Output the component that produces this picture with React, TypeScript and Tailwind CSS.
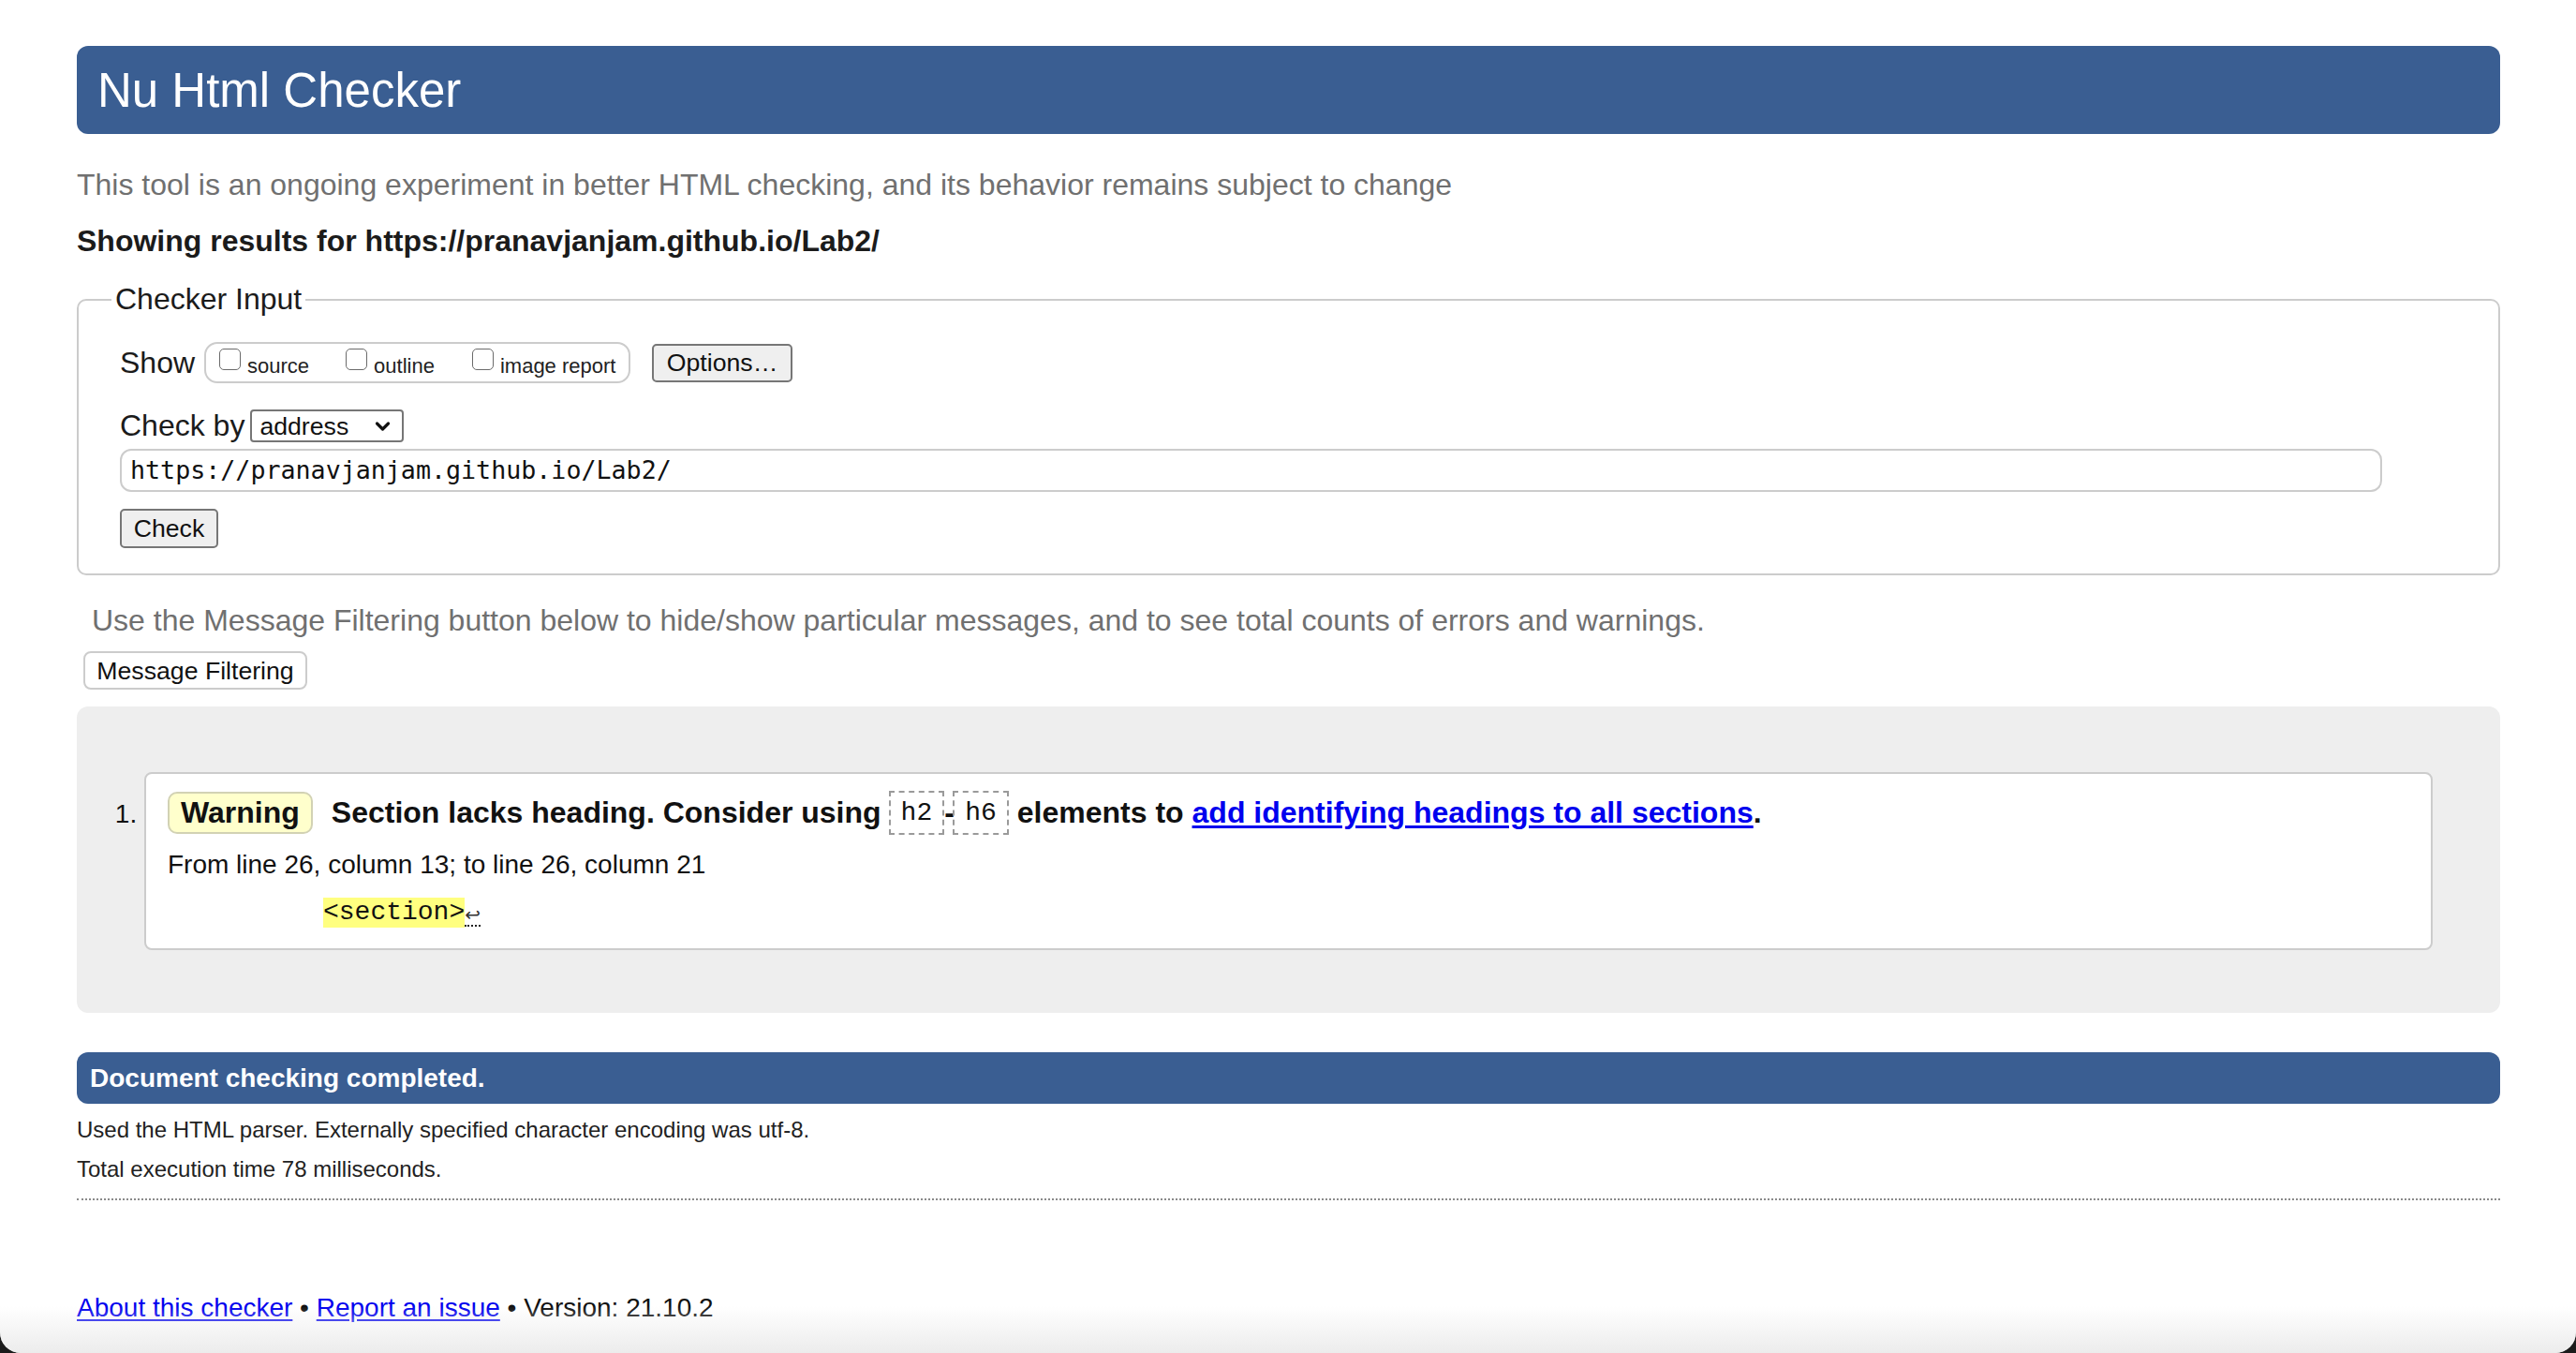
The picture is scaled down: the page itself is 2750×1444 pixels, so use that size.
import React from "react";

function Box({ label }: { label: string }) {
  return (
    <label className="flex items-center">
      <span className="-mt-[8px] block h-[23px] w-[23px] rounded-[5px] border-[1.5px] border-[#6b6b6b] bg-white" />
      <span className="ml-[7px] mt-[8px] text-[22px] leading-[26px] text-[#222]">{label}</span>
    </label>
  );
}

export default function App() {
  return (
    <div className="w-[2750px] h-[1444px] bg-[#1b1b1b] overflow-hidden">
      <div className="relative h-[1444px] w-[2750px] overflow-hidden rounded-b-[22px] bg-white font-['Liberation_Sans',Arial,sans-serif] text-[#111]">
        <div className="pl-[82px] pr-[81px] pt-[49px]">
          <header className="flex h-[94px] items-center rounded-[12px] bg-[#3a5e92] pl-[22px] text-[51px] leading-none text-white">
            Nu Html Checker
          </header>

          <p className="mt-[36px] text-[32px] leading-[37px] text-[#707070]">
            This tool is an ongoing experiment in better HTML checking, and its behavior remains subject to change
          </p>
          <p className="mt-[23px] text-[32px] font-bold leading-[37px] text-[#1b1b1b]">
            Showing results for https://pranavjanjam.github.io/Lab2/
          </p>

          <fieldset className="mt-[25px] rounded-[10px] border-2 border-[#cccccc] pb-[27px] pl-[44px] pr-[40px]">
            <legend className="-ml-[9px] px-[4px] text-[32px] leading-[37px] text-[#1b1b1b]">Checker Input</legend>

            <div className="mt-[27px] flex h-[44px] items-center">
              <span className="text-[32px] leading-[37px] text-[#1b1b1b]">Show</span>
              <div className="ml-[10px] flex h-[44px] w-[455px] items-center rounded-[14px] border-2 border-[#cccccc] pl-[14px]">
                <Box label="source" />
                <div className="w-[39px]" />
                <Box label="outline" />
                <div className="w-[40px]" />
                <Box label="image report" />
              </div>
              <button className="ml-[23px] flex h-[41px] w-[150px] items-center justify-center rounded-[5px] border-2 border-[#767676] bg-[#efefef] text-[26.67px] text-[#111]">
                Options…
              </button>
            </div>

            <div className="mt-[28px] flex h-[35px] items-center">
              <span className="text-[32px] leading-[37px] text-[#1b1b1b]">Check by</span>
              <div className="ml-[6px] flex h-[35px] w-[164px] items-center justify-between rounded-[4px] border-2 border-[#767676] bg-white pl-[8px] pr-[12px] text-[26.67px] text-[#111]">
                <span>address</span>
                <svg width="17" height="12" viewBox="0 0 17 12" fill="none">
                  <path d="M2.5 3 L8.5 9 L14.5 3" stroke="#111" strokeWidth="3.2" strokeLinecap="round" strokeLinejoin="round" />
                </svg>
              </div>
            </div>

            <div className="mt-[7px] flex h-[46px] w-[2415px] items-center rounded-[12px] border-2 border-[#cccccc] pl-[9px] font-['DejaVu_Sans_Mono',monospace] text-[26.67px] text-[#111]">
              https://pranavjanjam.github.io/Lab2/
            </div>

            <button className="mt-[18px] flex h-[42px] w-[105px] items-center justify-center rounded-[5px] border-2 border-[#767676] bg-[#efefef] text-[26.67px] text-[#111]">
              Check
            </button>
          </fieldset>

          <p className="ml-[16px] mt-[30px] text-[32px] leading-[37px] text-[#707070]">
            Use the Message Filtering button below to hide/show particular messages, and to see total counts of errors and warnings.
          </p>
          <button className="ml-[7px] mt-[14px] flex h-[41px] w-[239px] items-center justify-center rounded-[8px] border-2 border-[#cccccc] bg-white text-[26.67px] text-[#111]">
            Message Filtering
          </button>

          <div className="mt-[18px] rounded-[12px] bg-[#eeeeee] pb-[67px] pl-[72px] pr-[72px] pt-[70px]">
            <ol className="list-decimal">
              <li className="rounded-[8px] border-2 border-[#cccccc] bg-white pb-[22px] pl-[23px] pt-[18px] text-[28px] leading-[32px] text-[#111]">
                <div className="flex items-center text-[32px] font-bold leading-[37px] text-[#111]">
                  <span className="flex h-[45px] items-center rounded-[10px] border-2 border-[#d2d2b4] bg-[#ffffcc] px-[12px]">Warning</span>
                  <span className="ml-[20px]">Section lacks heading. Consider using</span>
                  <code className="ml-[8px] flex h-[47px] items-center border-2 border-dashed border-[#9a9a9a] px-[11px] font-['Liberation_Mono',monospace] text-[28px] font-normal">h2</code>
                  <span className="w-[9px] text-center">-</span>
                  <code className="flex h-[47px] items-center border-2 border-dashed border-[#9a9a9a] px-[11px] font-['Liberation_Mono',monospace] text-[28px] font-normal">h6</code>
                  <span className="ml-[9px]">
                    elements to{" "}
                    <a href="#" className="text-[#0000ee] underline underline-offset-[3px]">add identifying headings to all sections</a>.
                  </span>
                </div>
                <p className="mt-[16px] text-[28px] leading-[32px] text-[#111]">From line 26, column 13; to line 26, column 21</p>
                <p className="ml-[166px] mt-[19px] flex items-center text-[28px] leading-[32px]">
                  <code className="bg-[#ffff80] font-['Liberation_Mono',monospace] text-[28px] leading-[32px] text-[#111]">&lt;section&gt;</code>
                  <span className="mt-[6px] border-b-2 border-dotted border-[#222] font-['DejaVu_Sans',sans-serif] text-[20px] leading-[22px] text-[#333]">↩</span>
                </p>
              </li>
            </ol>
          </div>

          <div className="mt-[42px] flex h-[55px] items-center rounded-[12px] bg-[#3a5e92] pl-[14px] text-[28px] font-bold text-white">
            Document checking completed.
          </div>
          <p className="mt-[14px] text-[24px] leading-[28px] text-[#222]">
            Used the HTML parser. Externally specified character encoding was utf-8.
          </p>
          <p className="mt-[14px] text-[24px] leading-[28px] text-[#222]">Total execution time 78 milliseconds.</p>
          <div className="mt-[17px] border-t-2 border-dotted border-[#8a8a8a]" />

          <p className="mt-[99px] text-[28px] leading-[32px] text-[#111]">
            <a href="#" className="text-[#0000ee] underline underline-offset-[3px]">About this checker</a> •{" "}
            <a href="#" className="text-[#0000ee] underline underline-offset-[3px]">Report an issue</a> • Version: 21.10.2
          </p>
        </div>
        <div className="pointer-events-none absolute bottom-0 left-0 right-0 h-[50px] bg-gradient-to-b from-[#ffffff00] to-[#ececec]" />
      </div>
    </div>
  );
}
